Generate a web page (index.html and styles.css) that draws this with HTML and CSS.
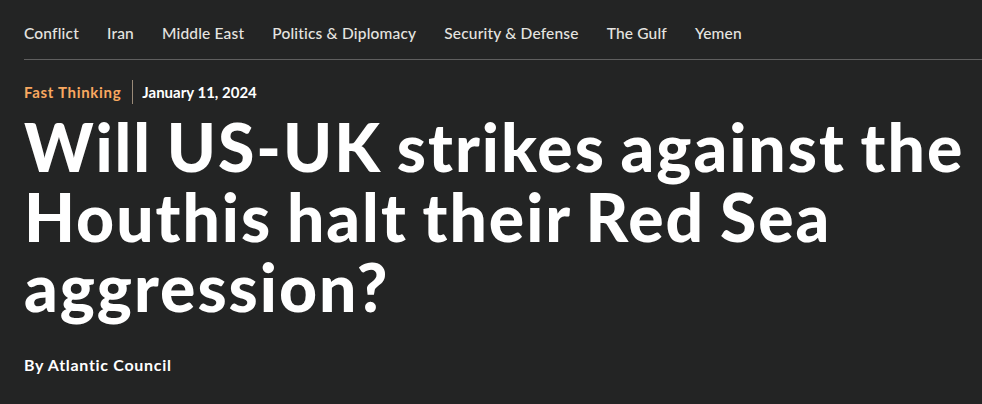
FILE: index.html
```html
<!DOCTYPE html>
<html lang="en">
<head>
<meta charset="utf-8">
<title>Will US-UK strikes against the Houthis halt their Red Sea aggression?</title>
<link rel="stylesheet" href="styles.css">
</head>
<body>
<div class="page">
  <nav class="topics">
    <a href="#">Conflict</a>
    <a href="#">Iran</a>
    <a href="#">Middle East</a>
    <a href="#">Politics &amp; Diplomacy</a>
    <a href="#">Security &amp; Defense</a>
    <a href="#">The Gulf</a>
    <a href="#">Yemen</a>
  </nav>
  <div class="meta">
    <span class="series">Fast Thinking</span>
    <span class="sep"></span>
    <span class="date">January 11, 2024</span>
  </div>
  <h1 class="title">Will US-UK strikes against the Houthis halt their Red Sea aggression?</h1>
  <p class="byline">By Atlantic Council</p>
</div>
</body>
</html>
```

FILE: styles.css
```css
html, body {
  margin: 0;
  padding: 0;
  background: #232424;
}
body {
  font-family: Lato, "Liberation Sans", sans-serif;
  color: #ffffff;
  width: 982px;
  height: 404px;
  overflow: hidden;
}
.page {
  padding-left: 24px;
}
.topics {
  display: flex;
  gap: 28px;
  padding-top: 24px;
  height: 60px;
  box-sizing: border-box;
  border-bottom: 1px solid #5f5f5f;
}
.topics a {
  color: #e6e4e0;
  text-decoration: none;
  font-size: 15.5px;
  line-height: 18px;
  font-weight: 500;
  letter-spacing: 0.18px;
}
.meta {
  display: flex;
  align-items: center;
  margin-top: 20px;
  height: 24px;
}
.series {
  color: #f9a860;
  font-weight: 700;
  font-size: 15px;
  letter-spacing: 0.7px;
}
.sep {
  width: 1px;
  height: 24px;
  background: #9a8a78;
  margin: 0 9px 0 11px;
}
.date {
  font-size: 15px;
  font-weight: 700;
  color: #ffffff;
}
.title {
  margin: 8px 0 0;
  font-size: 66px;
  line-height: 70px;
  font-weight: 900;
  letter-spacing: 2px;
  word-spacing: -3px;
  color: #ffffff;
  width: 958px;
}
.byline {
  margin: 33px 0 0;
  font-size: 16px;
  font-weight: 700;
  letter-spacing: 0.7px;
  color: #ffffff;
}
```
